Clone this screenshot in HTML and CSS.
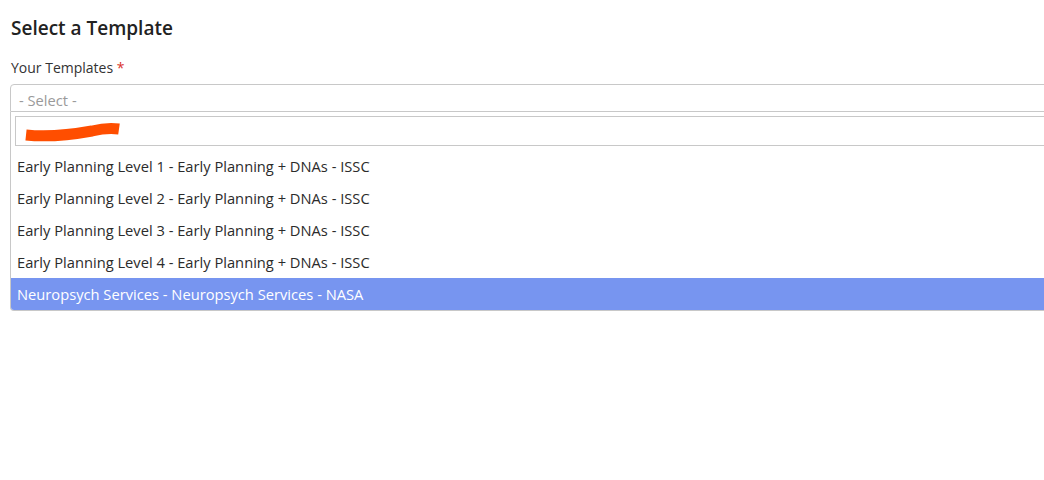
FILE: index.html
```html
<!DOCTYPE html>
<html>
<head>
<meta charset="utf-8">
<link rel="stylesheet" href="styles.css">
</head>
<body>
<div class="page">
  <h1 class="title">Select a Template</h1>
  <label class="label">Your Templates <span class="req">*</span></label>
  <div class="dropdown">
    <div class="select">- Select -</div>
    <div class="panel">
      <div class="search">
        <svg class="scribble" width="104" height="24" viewBox="0 0 104 24">
          <path d="M6 16 C 25 18, 50 16, 72 12 C 84 9, 92 9, 99 10" stroke="#ff4e00" stroke-width="11" fill="none" stroke-linecap="butt"/>
        </svg>
      </div>
      <ul class="options">
        <li class="opt">Early Planning Level 1 - Early Planning + DNAs - ISSC</li>
        <li class="opt">Early Planning Level 2 - Early Planning + DNAs - ISSC</li>
        <li class="opt">Early Planning Level 3 - Early Planning + DNAs - ISSC</li>
        <li class="opt">Early Planning Level 4 - Early Planning + DNAs - ISSC</li>
        <li class="opt active">Neuropsych Services - Neuropsych Services - NASA</li>
      </ul>
    </div>
  </div>
</div>
</body>
</html>
```
FILE: styles.css
```css
html, body {
  margin: 0;
  padding: 0;
  background: #fff;
}
.page {
  font-family: "Open Sans", "Noto Sans", sans-serif;
  color: #2b2b2b;
  padding: 14px 0 0 10px;
  overflow: hidden;
}
.title {
  margin: 0 0 0 1px;
  font-size: 19px;
  font-weight: 600;
  line-height: 28px;
  color: #222;
}
.label {
  display: block;
  margin: 16px 0 0 1px;
  font-size: 14px;
  line-height: 20px;
  color: #333;
}
.req { color: #d9322a; }
.dropdown {
  margin-top: 6px;
  width: 1100px;
}
.select {
  height: 26px;
  border: 1px solid #c8c8c8;
  border-radius: 4px 4px 0 0;
  font-size: 14.7px;
  line-height: 30px;
  padding-left: 8px;
  color: #9a9a9a;
}
.panel {
  border: 1px solid #c8c8c8;
  border-top: none;
  border-radius: 0 0 4px 4px;
  overflow: hidden;
  padding-top: 4px;
}
.search {
  margin-left: 4px;
  height: 28px;
  border: 1px solid #c8c8c8;
  display: flex;
  align-items: center;
  padding-left: 4px;
}
.options {
  list-style: none;
  margin: 4px 0 0 0;
  padding: 0;
}
.opt {
  height: 32px;
  line-height: 32px;
  font-size: 14.7px;
  padding-left: 6px;
  color: #2b2b2b;
}
.opt.active {
  background: #7795f0;
  color: #fff;
}
```
